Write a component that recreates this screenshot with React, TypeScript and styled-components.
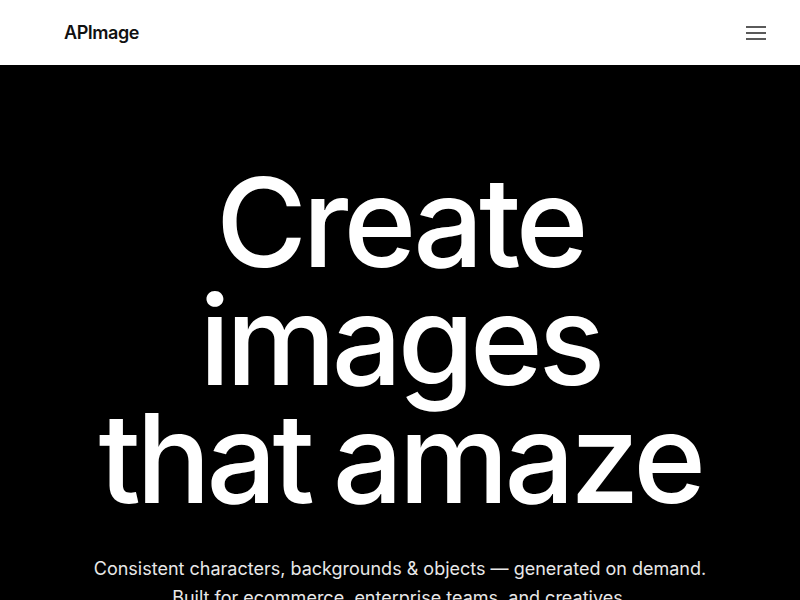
import React from "react";
import styled, { createGlobalStyle } from "styled-components";

const Global = createGlobalStyle`
  html, body { margin: 0; padding: 0; background: #000; }
  body { font-family: Inter, "Noto Sans", sans-serif; -webkit-font-smoothing: antialiased; }
  * { box-sizing: border-box; }
`;

const Header = styled.header`
  height: 65px;
  background: #fff;
  display: flex;
  align-items: center;
  justify-content: space-between;
  padding: 0 24px 0 64px;
`;

const Logo = styled.div`
  font-family: Inter, sans-serif;
  font-weight: 600;
  font-size: 18px;
  letter-spacing: -0.025em;
  color: #111;
`;

const MenuButton = styled.button`
  width: 40px;
  height: 40px;
  border: none;
  background: transparent;
  display: flex;
  align-items: center;
  justify-content: center;
  padding: 0;
  color: #5a5a5a;
`;

const Hero = styled.section`
  background: #000;
  color: #fff;
  padding: 98px 24px 0;
  display: flex;
  flex-direction: column;
  align-items: center;
  text-align: center;
  min-height: 535px;
`;

const Title = styled.h1`
  margin: 0;
  font-family: Inter, sans-serif;
  font-weight: 500;
  font-size: 124px;
  line-height: 118px;
  letter-spacing: -0.036em;
  word-spacing: -6px;
`;

const Sub = styled.p`
  margin: 37px 0 0;
  font-size: 18px;
  line-height: 29px;
  color: #e8e8e8;
`;

export default function App() {
  return (
    <>
      <Global />
      <Header>
        <Logo>APImage</Logo>
        <MenuButton aria-label="menu">
          <svg width="20" height="14" viewBox="0 0 20 14" fill="none" stroke="currentColor" strokeWidth="2">
            <path d="M0 1h20M0 7h20M0 13h20" />
          </svg>
        </MenuButton>
      </Header>
      <Hero>
        <Title>
          Create
          <br />
          images
          <br />
          that amaze
        </Title>
        <Sub>
          Consistent characters, backgrounds &amp; objects — generated on demand.
          <br />
          Built for ecommerce, enterprise teams, and creatives.
        </Sub>
      </Hero>
    </>
  );
}
